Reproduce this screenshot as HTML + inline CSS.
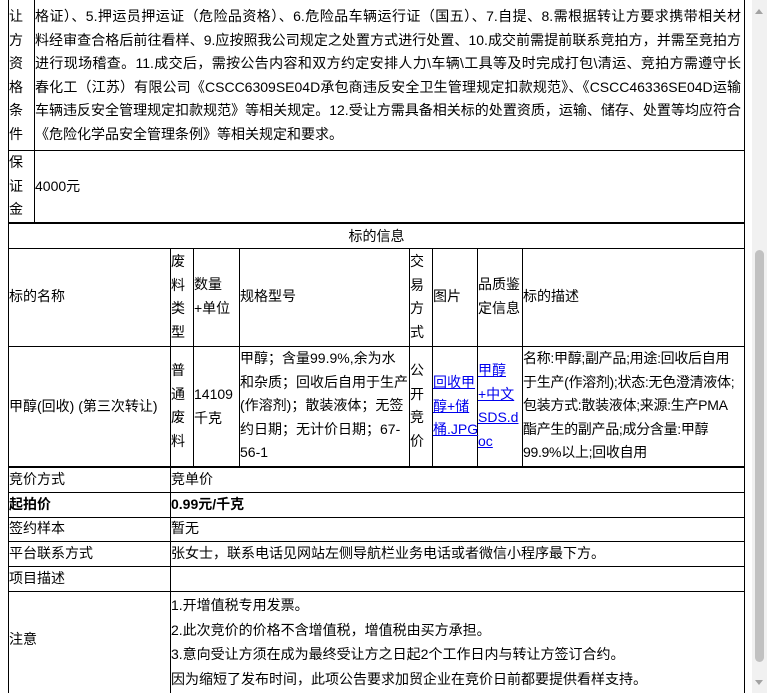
<!DOCTYPE html>
<html><head><meta charset="utf-8"><style>
body{margin:0;width:767px;height:693px;overflow:hidden;background:#fff;font-family:"Liberation Sans","Noto Sans CJK SC",sans-serif;font-size:14px;color:#000;position:relative}
.h{position:absolute;height:1px;background:#000}
.v{position:absolute;width:1px;background:#000}
.t{position:absolute;line-height:23.5px;white-space:nowrap}
.j div{text-align:justify;text-align-last:justify;width:706px;white-space:normal}
a{color:#00e;text-decoration:underline}
</style></head><body>
<div class="v" style="left:8px;top:0;height:224px"></div>
<div class="v" style="left:34px;top:0;height:224px"></div>
<div class="v" style="left:744px;top:0;height:693px"></div>
<div class="h" style="left:8px;top:150px;width:737px"></div>
<div class="h" style="left:8px;top:222px;width:737px;height:2px"></div>
<div class="t" style="left:9px;top:5px;width:20px;white-space:normal">让<br>方<br>资<br>格<br>条<br>件</div>
<div class="t j" style="left:35px;top:5px;">
<div>格证）、5.押运员押运证（危险品资格）、6.危险品车辆运行证（国五）、7.自提、8.需根据转让方要求携带相关材</div>
<div>料经审查合格后前往看样、9.应按照我公司规定之处置方式进行处置、10.成交前需提前联系竞拍方，并需至竞拍方</div>
<div>进行现场稽查。11.成交后，需按公告内容和双方约定安排人力\车辆\工具等及时完成打包\清运、竞拍方需遵守长</div>
<div>春化工（江苏）有限公司《CSCC6309SE04D承包商违反安全卫生管理规定扣款规范》、《CSCC46336SE04D运输</div>
<div>车辆违反安全管理规定扣款规范》等相关规定。12.受让方需具备相关标的处置资质，运输、储存、处置等均应符合</div>
<div style="text-align-last:left">《危险化学品安全管理条例》等相关规定和要求。</div></div>
<div class="t" style="left:9px;top:151px">保<br>证<br>金</div>
<div class="t" style="left:35px;top:175px">4000元</div>
<div class="v" style="left:8px;top:224px;height:469px"></div>
<div class="h" style="left:8px;top:248px;width:737px"></div>
<div class="t" style="left:8px;top:225px;width:737px;text-align:center">标的信息</div>
<div class="h" style="left:8px;top:346px;width:737px"></div>
<div class="h" style="left:8px;top:466px;width:737px;height:2px"></div>
<div class="v" style="left:170px;top:248px;height:445px"></div>
<div class="v" style="left:193px;top:248px;height:219px"></div>
<div class="v" style="left:239px;top:248px;height:219px"></div>
<div class="v" style="left:409px;top:248px;height:219px"></div>
<div class="v" style="left:432px;top:248px;height:219px"></div>
<div class="v" style="left:477px;top:248px;height:219px"></div>
<div class="v" style="left:522px;top:248px;height:219px"></div>
<div class="t" style="left:9px;top:285px">标的名称</div>
<div class="t" style="left:171px;top:250px">废<br>料<br>类<br>型</div>
<div class="t" style="left:194px;top:273px">数量<br>+单位</div>
<div class="t" style="left:240px;top:285px">规格型号</div>
<div class="t" style="left:410px;top:250px">交<br>易<br>方<br>式</div>
<div class="t" style="left:433px;top:285px">图片</div>
<div class="t" style="left:478px;top:273px">品质鉴<br>定信息</div>
<div class="t" style="left:523px;top:285px">标的描述</div>
<div class="t" style="left:9px;top:395px">甲醇(回收) (第三次转让)</div>
<div class="t" style="left:171px;top:359px">普<br>通<br>废<br>料</div>
<div class="t" style="left:194px;top:383px">14109<br>千克</div>
<div class="t" style="left:240px;top:347px">甲醇；含量99.9%,余为水<br>和杂质；回收后自用于生产<br>(作溶剂)；散装液体；无签<br>约日期；无计价日期；67-<br>56-1</div>
<div class="t" style="left:410px;top:359px">公<br>开<br>竞<br>价</div>
<div class="t" style="left:433px;top:371px"><a>回收甲</a><br><a>醇+储</a><br><a>桶.JPG</a></div>
<div class="t" style="left:478px;top:359px"><a>甲醇</a><br><a>+中文</a><br><a>SDS.d</a><br><a>oc</a></div>
<div class="t" style="left:523px;top:347px;letter-spacing:-0.3px">名称:甲醇;副产品;用途:回收后自用<br>于生产(作溶剂);状态:无色澄清液体;<br>包装方式:散装液体;来源:生产PMA<br>酯产生的副产品;成分含量:甲醇<br>99.9%以上;回收自用</div>
<div class="h" style="left:8px;top:492px;width:737px"></div>
<div class="h" style="left:8px;top:517px;width:737px"></div>
<div class="h" style="left:8px;top:541px;width:737px"></div>
<div class="h" style="left:8px;top:566px;width:737px"></div>
<div class="h" style="left:8px;top:591px;width:737px"></div>
<div class="t" style="left:9px;top:468px">竞价方式</div><div class="t" style="left:171px;top:468px">竞单价</div>
<div class="t" style="left:9px;top:493px;font-weight:bold">起拍价</div><div class="t" style="left:171px;top:493px;font-weight:bold">0.99元/千克</div>
<div class="t" style="left:9px;top:517px">签约样本</div><div class="t" style="left:171px;top:517px">暂无</div>
<div class="t" style="left:9px;top:542px">平台联系方式</div><div class="t" style="left:171px;top:542px">张女士，联系电话见网站左侧导航栏业务电话或者微信小程序最下方。</div>
<div class="t" style="left:9px;top:567px">项目描述</div>
<div class="t" style="left:9px;top:628px">注意</div>
<div class="t" style="left:171px;top:593px;line-height:24.5px">1.开增值税专用发票。<br>2.此次竞价的价格不含增值税，增值税由买方承担。<br>3.意向受让方须在成为最终受让方之日起2个工作日内与转让方签订合约。<br>因为缩短了发布时间，此项公告要求加贸企业在竞价日前都要提供看样支持。</div>
<div style="position:absolute;left:752px;top:0;width:15px;height:693px;background:#f1f1f1"></div>
<div style="position:absolute;left:755px;top:250px;width:9px;height:412px;background:#c1c1c1;border-radius:5px"></div>
<div style="position:absolute;left:755px;top:9px;width:0;height:0;border-left:4px solid transparent;border-right:4px solid transparent;border-bottom:5px solid #a3a3a3"></div>
<div style="position:absolute;left:755px;top:680px;width:0;height:0;border-left:4px solid transparent;border-right:4px solid transparent;border-top:5px solid #a3a3a3"></div>
</body></html>
